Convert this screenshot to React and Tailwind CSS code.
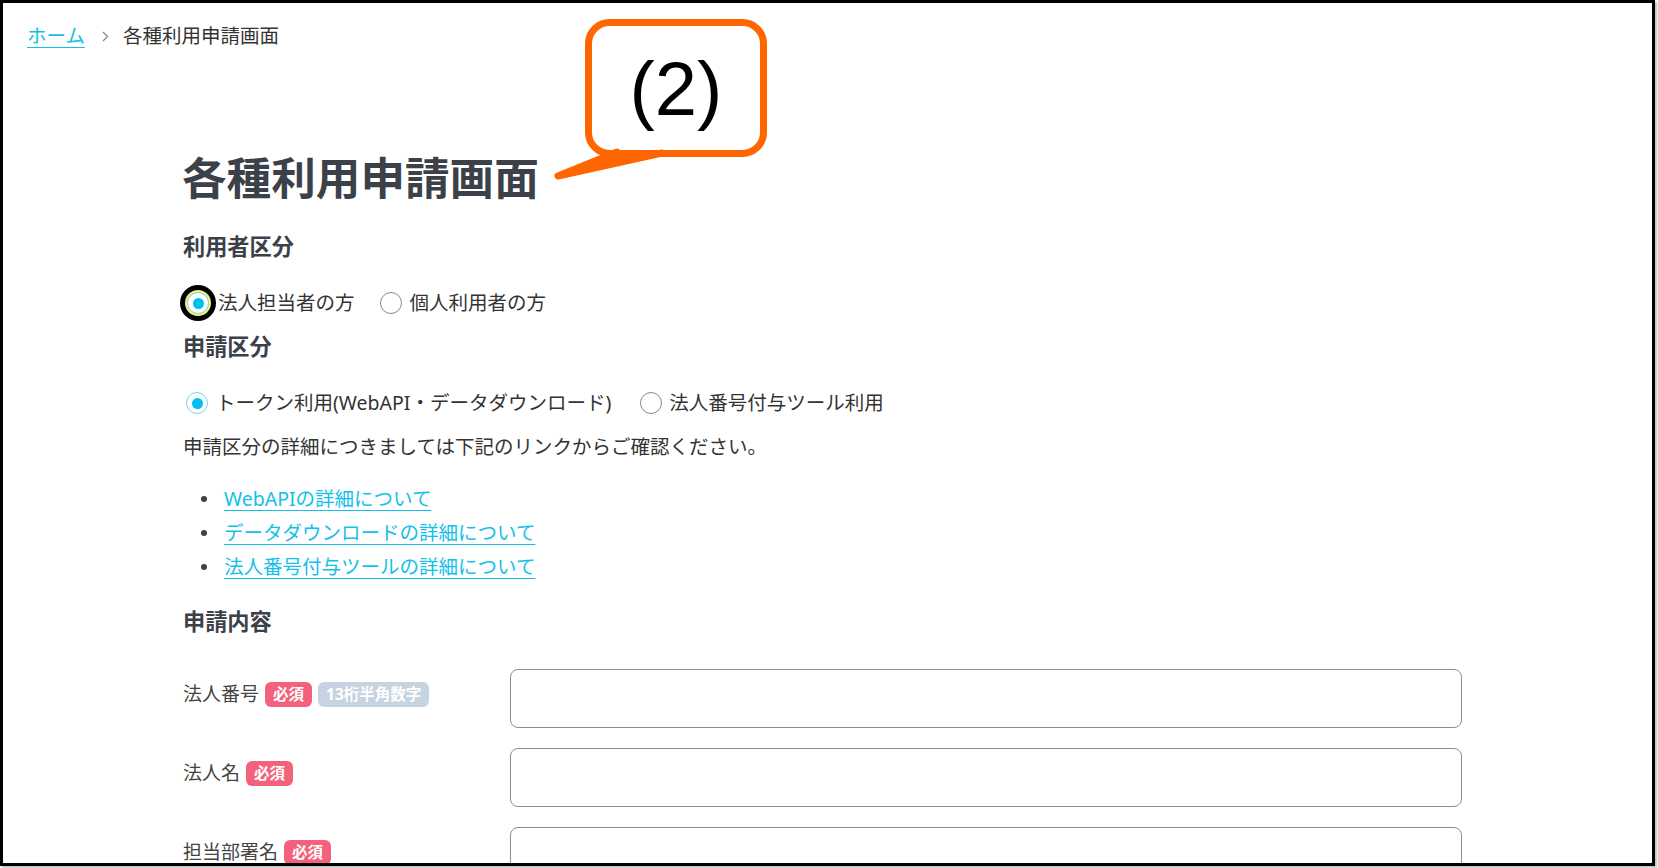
import React from "react";

const font = { fontFamily: '"Noto Sans", "Noto Sans CJK JP", sans-serif' };

// Radio button drawn with plain elements so the focus ring can be shown
const Radio = ({ checked, focused }) => (
  <span
    className={
      "relative flex h-[22px] w-[22px] shrink-0 items-center justify-center rounded-full border bg-white " +
      (checked ? "border-[#6fd6f2]" : "border-[#8a8a8a]") +
      (focused ? " shadow-[0_0_0_2px_#f3f07a,0_0_0_7px_#000]" : "")
    }
  >
    {checked && <span className="h-[11px] w-[11px] rounded-full bg-[#00bfee]" />}
  </span>
);

const Badge = ({ children, tone }) => (
  <span
    className={
      "flex h-[25px] items-center rounded-[6px] text-[15.5px] font-bold leading-none text-white " +
      (tone === "info" ? "bg-[#c6d4e1] px-[8px]" : "bg-[#f3617d] px-[8px]")
    }
  >
    {children}
  </span>
);

const FormRow = ({ label, badges }) => (
  <div className="flex">
    <div className="mt-[8px] flex h-[35px] w-[327px] shrink-0 items-center gap-[6px]">
      <span className="text-[19px] text-[#444]">{label}</span>
      {badges}
    </div>
    <div className="h-[59px] w-[952px] rounded-[8px] border border-[#8e8e8e] bg-white" />
  </div>
);

export default function App() {
  const links = [
    "WebAPIの詳細について",
    "データダウンロードの詳細について",
    "法人番号付与ツールの詳細について",
  ];

  return (
    <div className="relative h-[868px] w-[1658px] overflow-hidden bg-white" style={font}>
      <div className="h-[866px] w-[1655px] overflow-hidden border-[3px] border-black shadow-[2px_2px_2px_rgba(0,0,0,0.25)]">
        {/* Breadcrumb */}
        <div className="flex h-[66px] items-center pl-[24px] text-[19.5px]">
          <a className="text-[#12c0ea] underline underline-offset-[4px]">ホーム</a>
          <svg className="ml-[17px] mr-[14px]" width="7" height="11" viewBox="0 0 7 11">
            <path d="M1 1l4.5 4.5L1 10" fill="none" stroke="#888" strokeWidth="1.2" />
          </svg>
          <span className="text-[#333]">各種利用申請画面</span>
        </div>

        <div className="pl-[179px]">
          <h1 className="mt-[79px] h-[60px] text-[44.6px] font-bold leading-[60px] text-[#3c4149]">
            各種利用申請画面
          </h1>

          {/* 利用者区分 */}
          <h2 className="mt-[24px] h-[30px] pl-[1px] text-[22.2px] font-bold leading-[30px] text-[#3c4149]">
            利用者区分
          </h2>
          <div className="mt-[21px] flex h-[40px] items-center pl-[5px] text-[19.5px] text-[#333]">
            <Radio checked focused />
            <span className="ml-[9px]">法人担当者の方</span>
            <span className="ml-[25px]">
              <Radio />
            </span>
            <span className="ml-[8px]">個人利用者の方</span>
          </div>

          {/* 申請区分 */}
          <h2 className="mt-[9px] h-[30px] pl-[1px] text-[22.2px] font-bold leading-[30px] text-[#3c4149]">
            申請区分
          </h2>
          <div className="mt-[21px] flex h-[40px] items-center pl-[4px] text-[19.5px] text-[#333]">
            <Radio checked />
            <span className="ml-[8px]">トークン利用(WebAPI・データダウンロード)</span>
            <span className="ml-[29px]">
              <Radio />
            </span>
            <span className="ml-[7px]">法人番号付与ツール利用</span>
          </div>
          <p className="mt-[9px] h-[30px] pl-[1px] text-[19.5px] leading-[30px] text-[#333]">
            申請区分の詳細につきましては下記のリンクからご確認ください。
          </p>

          <ul className="mt-[20px]">
            {links.map((l) => (
              <li key={l} className="flex h-[34px] items-center pl-[19px] text-[19.5px]">
                <span className="h-[6px] w-[6px] rounded-full bg-[#3d4148]" />
                <a className="ml-[17px] text-[#12c0ea] underline underline-offset-[4px]">{l}</a>
              </li>
            ))}
          </ul>

          {/* 申請内容 */}
          <h2 className="mt-[23px] h-[30px] pl-[1px] text-[22.2px] font-bold leading-[30px] text-[#3c4149]">
            申請内容
          </h2>
          <div className="mt-[32px] flex flex-col gap-[20px] pl-[1px]">
            <FormRow
              label="法人番号"
              badges={
                <>
                  <Badge>必須</Badge>
                  <Badge tone="info">13桁半角数字</Badge>
                </>
              }
            />
            <FormRow label="法人名" badges={<Badge>必須</Badge>} />
            <FormRow label="担当部署名" badges={<Badge>必須</Badge>} />
          </div>
        </div>
      </div>

      {/* Annotation callout */}
      <svg className="pointer-events-none absolute left-0 top-0" width="1658" height="200">
        <rect x="588.5" y="22.5" width="175" height="131" rx="21" fill="white" stroke="#ff6600" strokeWidth="7" />
        <polyline
          points="617,152 558,176 662,153"
          fill="#ff6600"
          stroke="#ff6600"
          strokeWidth="7"
          strokeLinejoin="round"
          strokeLinecap="round"
        />
      </svg>
      <div
        className="absolute left-[585px] top-[51px] w-[182px] text-center text-[76px] leading-[76px] text-black"
        style={{ fontFamily: '"Liberation Sans", Arial, sans-serif' }}
      >
        (2)
      </div>
    </div>
  );
}
